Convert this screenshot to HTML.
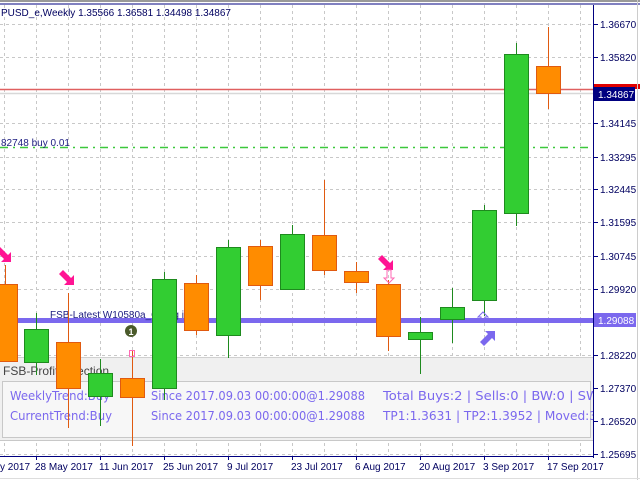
<!DOCTYPE html>
<html><head><meta charset="utf-8"><style>
html,body{margin:0;padding:0;background:#fff;width:640px;height:480px;overflow:hidden}
svg{display:block}
text{font-family:"Liberation Sans",sans-serif}
text.m{font-family:"DejaVu Sans",sans-serif}
</style></head><body>
<svg width="640" height="480" viewBox="0 0 640 480" xmlns="http://www.w3.org/2000/svg">
<defs><clipPath id="pc"><rect x="0" y="357" width="593" height="84"/></clipPath></defs>
<rect x="0" y="0" width="640" height="480" fill="#fff"/>
<line x1="0" y1="4" x2="640" y2="4" stroke="#000080" stroke-width="1"/>
<line x1="0" y1="1" x2="640" y2="1" stroke="#999" stroke-width="2"/>
<g stroke="#c8c8c8" stroke-width="1" stroke-dasharray="3,3">
<line x1="4.5" y1="5" x2="4.5" y2="456"/><line x1="36.5" y1="5" x2="36.5" y2="456"/><line x1="68.5" y1="5" x2="68.5" y2="456"/><line x1="100.5" y1="5" x2="100.5" y2="456"/><line x1="132.5" y1="5" x2="132.5" y2="456"/><line x1="164.5" y1="5" x2="164.5" y2="456"/><line x1="196.5" y1="5" x2="196.5" y2="456"/><line x1="228.5" y1="5" x2="228.5" y2="456"/><line x1="260.5" y1="5" x2="260.5" y2="456"/><line x1="292.5" y1="5" x2="292.5" y2="456"/><line x1="324.5" y1="5" x2="324.5" y2="456"/><line x1="356.5" y1="5" x2="356.5" y2="456"/><line x1="388.5" y1="5" x2="388.5" y2="456"/><line x1="420.5" y1="5" x2="420.5" y2="456"/><line x1="452.5" y1="5" x2="452.5" y2="456"/><line x1="484.5" y1="5" x2="484.5" y2="456"/><line x1="516.5" y1="5" x2="516.5" y2="456"/><line x1="548.5" y1="5" x2="548.5" y2="456"/><line x1="580.5" y1="5" x2="580.5" y2="456"/>
<line x1="0" y1="24.5" x2="593" y2="24.5"/><line x1="0" y1="57.5" x2="593" y2="57.5"/><line x1="0" y1="123.5" x2="593" y2="123.5"/><line x1="0" y1="157.5" x2="593" y2="157.5"/><line x1="0" y1="189.5" x2="593" y2="189.5"/><line x1="0" y1="222.5" x2="593" y2="222.5"/><line x1="0" y1="256.5" x2="593" y2="256.5"/><line x1="0" y1="289.5" x2="593" y2="289.5"/><line x1="0" y1="355.5" x2="593" y2="355.5"/><line x1="0" y1="388.5" x2="593" y2="388.5"/><line x1="0" y1="421.5" x2="593" y2="421.5"/><line x1="0" y1="454.5" x2="593" y2="454.5"/>
</g>
<line x1="0" y1="89.5" x2="593" y2="89.5" stroke="#e06060" stroke-width="1.5"/>
<line x1="0" y1="93.5" x2="593" y2="93.5" stroke="#d8d8d8" stroke-width="1.5"/>
<line x1="0" y1="147.5" x2="593" y2="147.5" stroke="#3cc83c" stroke-width="1.5" stroke-dasharray="8,5,2,5"/>
<text x="1" y="146" font-size="10" fill="#1c1c80">82748 buy 0.01</text>
<text x="1" y="16" font-size="10" fill="#000060">PUSD_e,Weekly  1.35566 1.36581 1.34498 1.34867</text>
<rect x="0" y="357" width="593" height="84" fill="#f0f0f0"/>
<line x1="0" y1="357.5" x2="593" y2="357.5" stroke="#d0d0d0"/>
<rect x="2.5" y="381.5" width="588" height="56" fill="#f7f7f7" stroke="#c8c8c8"/>
<line x1="0" y1="440.5" x2="593" y2="440.5" stroke="#c8c8c8"/>
<text x="3" y="375" font-size="12" fill="#444">FSB-ProfitDetection</text>
<g font-size="12" fill="#7b68ee" clip-path="url(#pc)">
<text class="m" x="10" y="400" textLength="100" lengthAdjust="spacingAndGlyphs">WeeklyTrend:Buy</text>
<text class="m" x="10" y="420" textLength="102" lengthAdjust="spacingAndGlyphs">CurrentTrend:Buy</text>
<text class="m" x="151" y="400" textLength="214" lengthAdjust="spacingAndGlyphs">Since 2017.09.03 00:00:00@1.29088</text>
<text class="m" x="151" y="420" textLength="214" lengthAdjust="spacingAndGlyphs">Since 2017.09.03 00:00:00@1.29088</text>
<text class="m" x="383" y="400" textLength="228" lengthAdjust="spacingAndGlyphs">Total Buys:2 | Sells:0 | BW:0 | SW:0</text>
<text class="m" x="383" y="420" textLength="214" lengthAdjust="spacingAndGlyphs">TP1:1.3631 | TP2:1.3952 | Moved:3</text>
</g>
<rect x="0" y="318" width="593" height="5" fill="#7b68ee"/>
<text x="50" y="318" font-size="10" fill="#1c1c80">FSB-Latest W10580a_CPr   ig   io</text>
<circle cx="131" cy="331" r="6" fill="#4a5a2a"/>
<text x="131" y="335" font-size="9" fill="#fff" text-anchor="middle" font-weight="bold">1</text>
<g stroke-width="1">
<g stroke="#e05a10" fill="#ff8c00">
<line x1="5.5" y1="265" x2="5.5" y2="362"/><rect x="-7.5" y="284.5" width="25" height="77"/>
<line x1="68.5" y1="293" x2="68.5" y2="428"/><rect x="56.5" y="342.5" width="24" height="46"/>
<line x1="132.5" y1="350" x2="132.5" y2="446"/><rect x="120.5" y="378.5" width="24" height="19"/>
<line x1="196.5" y1="275" x2="196.5" y2="335"/><rect x="184.5" y="283.5" width="24" height="47"/>
<line x1="260.5" y1="240" x2="260.5" y2="300"/><rect x="248.5" y="246.5" width="24" height="39"/>
<line x1="324.5" y1="180" x2="324.5" y2="275"/><rect x="312.5" y="235.5" width="24" height="35"/>
<line x1="356.5" y1="262" x2="356.5" y2="293"/><rect x="344.5" y="271.5" width="24" height="11"/>
<line x1="388.5" y1="280" x2="388.5" y2="351"/><rect x="376.5" y="284.5" width="24" height="52"/>
<line x1="548.5" y1="27" x2="548.5" y2="109"/><rect x="536.5" y="66.5" width="24" height="27"/>
</g>
<g stroke="#1e8a1e" fill="#32cd32">
<line x1="36.5" y1="313" x2="36.5" y2="375"/><rect x="24.5" y="329.5" width="24" height="33"/>
<line x1="100.5" y1="359" x2="100.5" y2="426"/><rect x="88.5" y="373.5" width="24" height="23"/>
<line x1="164.5" y1="272" x2="164.5" y2="400"/><rect x="152.5" y="279.5" width="24" height="109"/>
<line x1="228.5" y1="240" x2="228.5" y2="358"/><rect x="216.5" y="247.5" width="24" height="88"/>
<line x1="292.5" y1="225" x2="292.5" y2="289"/><rect x="280.5" y="234.5" width="24" height="55"/>
<line x1="420.5" y1="317" x2="420.5" y2="374"/><rect x="408.5" y="332.5" width="24" height="7"/>
<line x1="452.5" y1="288" x2="452.5" y2="343"/><rect x="440.5" y="307.5" width="24" height="12"/>
<line x1="484.5" y1="205" x2="484.5" y2="316"/><rect x="472.5" y="210.5" width="24" height="90"/>
<line x1="516.5" y1="43" x2="516.5" y2="226"/><rect x="504.5" y="54.5" width="24" height="159"/>
</g>
</g>
<g fill="#ff1493">
<path d="M0 247 L8 255 L11 252 L11 262 L1 262 L4 259 L-4 251Z"/>
<path d="M63 270 L71 278 L74 275 L74 285 L64 285 L67 282 L59 274Z"/>
<path d="M382 255 L390 263 L393 260 L393 270 L383 270 L386 267 L378 259Z"/>
</g>
<path d="M387 270 v8 h-3 l5 5 l5 -5 h-3 v-8z" fill="none" stroke="#ff69b4"/>
<rect x="129.5" y="350.5" width="5" height="6" fill="none" stroke="#ff69b4"/>
<path d="M481 322 v-5 h-3 l5 -5 l5 5 h-3 v5z" fill="none" stroke="#7b68ee"/>
<path d="M480 342 L488 334 L485 331 L495 331 L495 341 L492 338 L484 346Z" fill="#7b68ee"/>
<line x1="593.5" y1="5" x2="593.5" y2="458" stroke="#000080"/>
<line x1="0" y1="456.5" x2="594" y2="456.5" stroke="#000080"/>
<g stroke="#000080">
<line x1="594" y1="24.5" x2="598" y2="24.5"/><line x1="594" y1="57.5" x2="598" y2="57.5"/><line x1="594" y1="123.5" x2="598" y2="123.5"/><line x1="594" y1="157.5" x2="598" y2="157.5"/><line x1="594" y1="189.5" x2="598" y2="189.5"/><line x1="594" y1="222.5" x2="598" y2="222.5"/><line x1="594" y1="256.5" x2="598" y2="256.5"/><line x1="594" y1="289.5" x2="598" y2="289.5"/><line x1="594" y1="355.5" x2="598" y2="355.5"/><line x1="594" y1="388.5" x2="598" y2="388.5"/><line x1="594" y1="421.5" x2="598" y2="421.5"/><line x1="594" y1="454.5" x2="598" y2="454.5"/>
<line x1="36.5" y1="456" x2="36.5" y2="460"/><line x1="100.5" y1="456" x2="100.5" y2="460"/><line x1="164.5" y1="456" x2="164.5" y2="460"/><line x1="228.5" y1="456" x2="228.5" y2="460"/><line x1="292.5" y1="456" x2="292.5" y2="460"/><line x1="356.5" y1="456" x2="356.5" y2="460"/><line x1="420.5" y1="456" x2="420.5" y2="460"/><line x1="484.5" y1="456" x2="484.5" y2="460"/><line x1="548.5" y1="456" x2="548.5" y2="460"/>
</g>
<g font-size="10" fill="#000060">
<text x="600" y="28">1.36670</text><text x="600" y="61">1.35820</text><text x="600" y="127">1.34145</text><text x="600" y="161">1.33295</text><text x="600" y="193">1.32445</text><text x="600" y="226">1.31595</text><text x="600" y="260">1.30745</text><text x="600" y="293">1.29920</text><text x="600" y="359">1.28220</text><text x="600" y="392">1.27370</text><text x="600" y="425">1.26520</text><text x="600" y="458">1.25695</text>
</g>
<rect x="594" y="84" width="46" height="5" fill="#e00000"/>
<rect x="594" y="87" width="41" height="14" fill="#000080"/>
<text x="598" y="98" font-size="10" fill="#fff">1.34867</text>
<rect x="594" y="313" width="42" height="14" fill="#7b68ee"/>
<text x="598" y="324" font-size="10" fill="#fff">1.29088</text>
<g font-size="10" fill="#000060">
<text x="0" y="470">y 2017</text><text x="35" y="470">28 May 2017</text><text x="99" y="470">11 Jun 2017</text><text x="163" y="470">25 Jun 2017</text><text x="227" y="470">9 Jul 2017</text><text x="291" y="470">23 Jul 2017</text><text x="355" y="470">6 Aug 2017</text><text x="419" y="470">20 Aug 2017</text><text x="483" y="470">3 Sep 2017</text><text x="547" y="470">17 Sep 2017</text>
</g>
<line x1="637.5" y1="0" x2="637.5" y2="480" stroke="#ccc"/>
<line x1="0" y1="478.5" x2="640" y2="478.5" stroke="#ddd"/>
</svg>
</body></html>
